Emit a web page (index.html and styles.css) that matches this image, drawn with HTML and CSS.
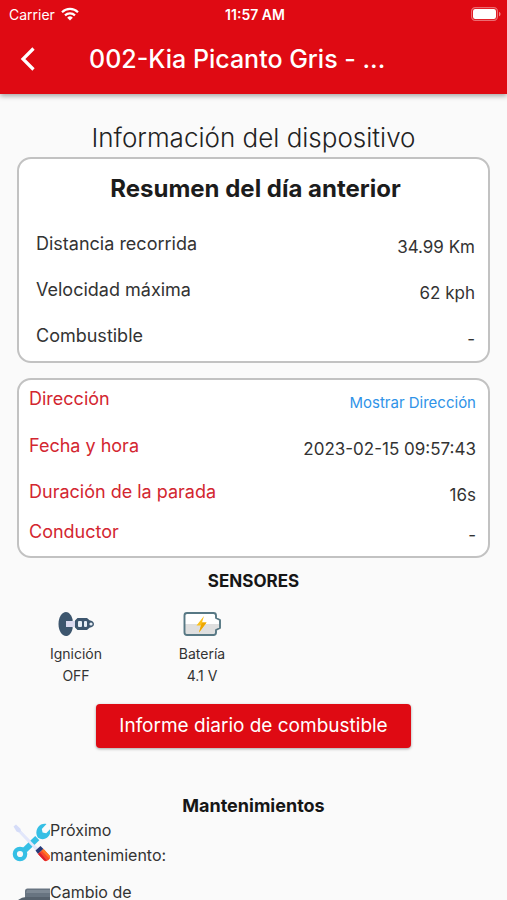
FILE: index.html
```
<!DOCTYPE html>
<html lang="es">
<head>
<meta charset="utf-8">
<meta name="viewport" content="width=device-width, initial-scale=1">
<title>Información del dispositivo</title>
<link rel="stylesheet" href="styles.css">
</head>
<body>
<div class="screen">
  <header class="topbar">
    <div class="status">
      <div class="status-left">
        <span>Carrier</span>
        <svg class="wifi" viewBox="0 0 18 14" aria-hidden="true">
          <g fill="none" stroke="#fff" stroke-width="2.2">
            <path d="M1 5.2a11.5 11.5 0 0 1 16 0"/>
            <path d="M4 8.4a7.2 7.2 0 0 1 10 0"/>
          </g>
          <path fill="#fff" d="M9 13.6 6.2 10.7a4 4 0 0 1 5.6 0z"/>
        </svg>
      </div>
      <time class="clock">11:57 AM</time>
      <div class="status-right">
        <svg class="power" viewBox="0 0 30 14" aria-hidden="true">
          <rect x=".6" y=".6" width="25.800" height="12.800" rx="3.600" fill="none" stroke="#fff" stroke-opacity=".4" stroke-width="1.200"/>
          <rect x="2" y="2" width="23" height="10" rx="2.200" fill="#fff"/>
          <path d="M28 4.700c2 .8 2 3.800 0 4.600z" fill="#fff" fill-opacity=".5"/>
        </svg>
      </div>
    </div>
    <div class="nav">
      <button class="back" type="button" aria-label="Atrás">
        <svg viewBox="0 0 16 26" aria-hidden="true"><path d="M13.500 2.500 3 13l10.500 10.500" fill="none" stroke="#fff" stroke-width="3.200"/></svg>
      </button>
      <h1>002-Kia Picanto Gris - ...</h1>
    </div>
  </header>

  <main>
    <h2 class="page-title">Información del dispositivo</h2>

    <section class="card summary">
      <h3>Resumen del día anterior</h3>
      <dl>
        <div class="row"><dt>Distancia recorrida</dt><dd>34.99 Km</dd></div>
        <div class="row"><dt>Velocidad máxima</dt><dd>62 kph</dd></div>
        <div class="row"><dt>Combustible</dt><dd>-</dd></div>
      </dl>
    </section>

    <section class="card details">
      <dl>
        <div class="row"><dt>Dirección</dt><dd><a href="#direccion">Mostrar Dirección</a></dd></div>
        <div class="row"><dt>Fecha y hora</dt><dd>2023-02-15 09:57:43</dd></div>
        <div class="row"><dt>Duración de la parada</dt><dd>16s</dd></div>
        <div class="row"><dt>Conductor</dt><dd>-</dd></div>
      </dl>
    </section>

    <h3 class="section-title">SENSORES</h3>
    <ul class="sensors">
      <li>
        <svg viewBox="0 0 38 26" aria-hidden="true">
          <path d="M9 1c3 0 5.500 3.200 6.600 7.600V17.400C14.500 22 12 25 9 25 4.900 25 1.500 19.600 1.500 13S4.900 1 9 1z" fill="#3d566e"/>
          <path d="M9 10h9v6H9z" fill="#d9d9ee"/>
          <path d="M20.500 7H30l2.500 2.200c2.600.3 4.500 1.800 4.500 3.800s-1.900 3.500-4.500 3.800L30 19h-9.500L18 16.500v-7z" fill="#3d566e"/>
          <rect x="21" y="10" width="4" height="6" rx="1" fill="#e6edf5"/>
          <rect x="27" y="10" width="3" height="6" rx="1" fill="#e6edf5"/>
          <circle cx="34" cy="13" r="1.600" fill="#e6edf5"/>
        </svg>
        <span>Ignición</span>
        <span>OFF</span>
      </li>
      <li>
        <svg viewBox="0 0 38 26" aria-hidden="true">
          <path d="M4 2h26.500q2.500 0 2.500 2.500V7l4 2v8l-4 2v2.500q0 2.500-2.500 2.500H4q-2.500 0-2.500-2.500v-17Q1.500 2 4 2z" fill="#fff"/>
          <path d="M1.500 13H37v4l-4 2v2.500q0 2.500-2.500 2.500H4q-2.500 0-2.500-2.500z" fill="#dfdfdf"/>
          <path d="M4 2h26.500q2.500 0 2.500 2.500V7l4 2v8l-4 2v2.500q0 2.500-2.500 2.500H4q-2.500 0-2.500-2.500v-17Q1.500 2 4 2z" fill="none" stroke="#577884" stroke-width="1.900" stroke-linejoin="round"/>
          <path d="M21 5 13.500 14.500H18L16 21.500l7.500-10H19z" fill="#fcc11a"/>
          <path d="M19 11.500h4.500l-7.500 10 2-7z" fill="#eda600"/>
        </svg>
        <span>Batería</span>
        <span>4.1 V</span>
      </li>
    </ul>

    <button class="report" type="button">Informe diario de combustible</button>

    <h3 class="section-title tasks-title">Mantenimientos</h3>
    <ul class="tasks">
      <li>
        <svg viewBox="0 0 38 40" aria-hidden="true">
          <path d="M1.500 3.500 4 1.500l4.500 4.200L9 8l18 18.500-2 2L7 9.500l-2.500-1z" fill="#d5dcf8"/>
          <path d="M25.300 15.200 12.700 27.200" stroke="#35bfe5" stroke-width="6"/>
          <path d="M29 1.500c2-.9 4-1 5.500-.5l-4.700 5 .8 3.600 3.600.7 4-4.300c1 4-1 8-4.700 9.500-2.600 1.100-5.300.7-7.500-.8-3.200-4.200-1.600-10.800 3-13.200z" fill="#35bfe5"/>
          <circle cx="8" cy="31" r="5.200" fill="none" stroke="#35bfe5" stroke-width="4.200"/>
          <path d="m7 9.500 2-1.500 18 18.500-2 2z" fill="#e2e7fb"/>
          <path d="m23.500 27.500 5-4.500 3 3-5.500 5z" fill="#293b78"/>
          <path d="m26 31 5.500-5 6 6.500q1.500 2.500-1 4.500t-4.500.5z" fill="#f9482c"/>
          <path d="m26 31 1.800-1.700 7 8.200q-1.800.8-3.100-.4z" fill="#d91f2d"/>
          <path d="m29.600 27.700 1.900-1.700 6 6.500q.9 1.700.1 3.200z" fill="#ff7b24"/>
        </svg>
        <span class="task-text">Próximo mantenimiento:</span>
      </li>
      <li>
        <svg class="engine" viewBox="0 0 38 40" aria-hidden="true">
          <path d="M13 3q0-2.500 2.500-2.500H38V14H13z" fill="#687481"/>
          <path d="M15 2h23v3H14z" fill="#7e8995"/>
          <path d="M6 12q4-3 8-3h24v27H6z" fill="#56616d"/>
        </svg>
        <span class="task-text">Cambio de</span>
      </li>
    </ul>
  </main>
</div>
</body>
</html>
```
FILE: styles.css
```
* { box-sizing: border-box; }

body {
  margin: 0;
  background: #fafafa;
  color: #333;
  font-family: "Inter", "Liberation Sans", sans-serif;
}

h1, h2, h3, dl, dd, ul { margin: 0; padding: 0; }
ul { list-style: none; }
button { font-family: inherit; border: 0; cursor: pointer; }

.screen {
  display: flex;
  flex-direction: column;
  height: 100vh;
  overflow: hidden;
}

.topbar {
  flex: none;
  background: #df0a13;
  color: #fff;
  box-shadow: 0 2px 5px rgba(0, 0, 0, .35);
  padding-bottom: 12px;
}

.status {
  display: grid;
  grid-template-columns: 1fr auto 1fr;
  align-items: center;
  height: 28px;
  padding: 0 6px 0 9px;
  font-size: 14px;
}
.status-left { display: flex; align-items: center; gap: 6px; }
.status-right { display: flex; justify-content: flex-end; }
.clock { font-weight: 600; }
.wifi { width: 18px; height: 14px; }
.power { width: 30px; height: 14px; }

.nav {
  display: flex;
  align-items: center;
  height: 54px;
  padding-top: 8px;
}
.back {
  display: flex;
  padding: 0 0 0 20px;
  width: 89px;
  background: none;
}
.back svg { width: 16px; height: 26px; }
h1 { font-size: 25px; font-weight: 500; line-height: 36px; }

main {
  flex: 1;
  min-height: 0;
  padding-top: 24px;
}

.page-title {
  text-align: center;
  font-size: 26px;
  font-weight: 300;
  line-height: 39px;
  color: #222;
}

.card {
  margin: 0 17px 15px;
  border: 2px solid #c2c2c2;
  border-radius: 14px;
  background: #fff;
}
.summary { padding: 16px 13px 7px 17px; }
.details { padding: 7px 12px 6px 10px; margin-bottom: 11px; }
.card h3 {
  margin-bottom: 29px;
  text-align: center;
  font-size: 24px;
  font-weight: 700;
  line-height: 28px;
  color: #1c1c1c;
}
.row {
  display: flex;
  justify-content: space-between;
  align-items: flex-start;
  margin-bottom: 16px;
  font-size: 17px;
}
.row:last-child { margin-bottom: 0; }
.row dt { font-size: 18px; line-height: 24px; }
.row dd { line-height: 30px; }
.details .row:nth-child(3) { margin-bottom: 10px; }
.details dt { color: #d32630; }
.details a { color: #2f93e8; font-size: 15px; text-decoration: none; }

.section-title {
  text-align: center;
  font-size: 17px;
  font-weight: 700;
  line-height: 24px;
  color: #161616;
}
.tasks-title { font-size: 18px; }

.sensors {
  display: grid;
  grid-template-columns: repeat(auto-fill, 126px);
  padding: 18px 0 0 13px;
  font-size: 14px;
  line-height: 22px;
}
.sensors li { display: flex; flex-direction: column; align-items: center; }
.sensors svg { width: 38px; height: 26px; margin-bottom: 6px; }

.report {
  display: block;
  margin: 17px auto 46px;
  padding: 0 23px;
  border-radius: 4px;
  background: #df0a13;
  box-shadow: 0 1px 3px rgba(0, 0, 0, .35);
  color: #fff;
  font-size: 19px;
  line-height: 44px;
}

.tasks { font-size: 16px; line-height: 25px; }
.tasks li {
  display: flex;
  align-items: center;
  padding-left: 12px;
  margin-bottom: 12px;
}
.tasks li:last-child { align-items: flex-start; }
.tasks svg { flex: none; width: 38px; height: 40px; }
.tasks .engine { margin-top: 8px; }
.task-text { width: 126px; }
```
